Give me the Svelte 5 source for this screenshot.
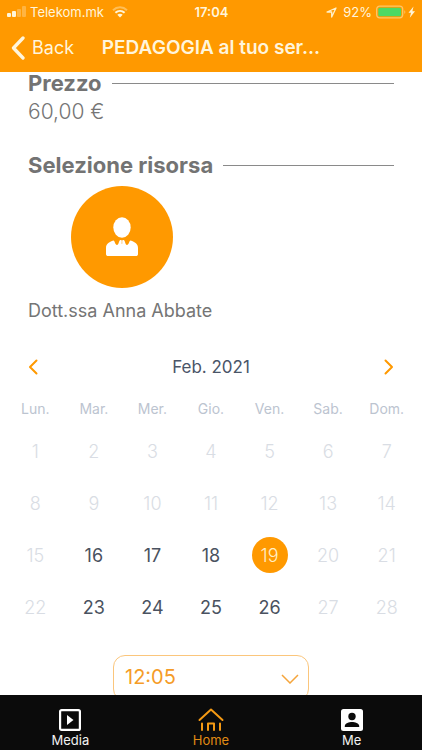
<script lang="ts">
	interface Day {
		day: number;
		available: boolean;
	}

	const weekdays = ['Lun.', 'Mar.', 'Mer.', 'Gio.', 'Ven.', 'Sab.', 'Dom.'];
	const availableDays = [16, 17, 18, 19, 23, 24, 25, 26];
	const times = ['12:05', '12:35', '13:05'];

	// February 2021 starts on a Monday, so it fills exactly four weeks
	const weeks: Day[][] = Array.from({ length: 4 }, (_, w) =>
		Array.from({ length: 7 }, (_, d) => {
			const day = w * 7 + d + 1;
			return { day, available: availableDays.includes(day) };
		})
	);

	let selectedDay = $state(19);
	let selectedTime = $state('12:05');
</script>

<div class="app">
	<header class="header">
		<div class="status-bar">
			<div class="status-side">
				<svg width="19" height="12" viewBox="0 0 19 12" fill="#fff5d8">
					<rect x="0" y="7" width="4" height="4" rx="1" />
					<rect x="5" y="5" width="4" height="6" rx="1" />
					<rect x="10" y="3" width="4" height="8" rx="1" opacity="0.3" />
					<rect x="15" y="0" width="4" height="11" rx="1" opacity="0.3" />
				</svg>
				<span class="carrier">Telekom.mk</span>
				<svg width="16" height="12" viewBox="0 0 16 12" fill="none" stroke="#fff5d8" stroke-width="2">
					<path d="M1 4.2C5 .4 11 .4 15 4.2" opacity="0.4" />
					<path d="M3.400 6.800c2.700-2.500 6.500-2.500 9.200 0" />
					<path d="M8 11.500 5.300 8.800c1.500-1.300 3.900-1.300 5.400 0z" fill="#fff5d8" stroke="none" />
				</svg>
			</div>
			<span class="clock">17:04</span>
			<div class="status-side right">
				<svg width="11" height="11" viewBox="0 0 11 11" fill="none" stroke="#fff0c8" stroke-width="1.300" stroke-linejoin="round">
					<path d="M10 1 1 5h4.700v5z" />
				</svg>
				<span class="battery-level">92%</span>
				<svg width="40" height="14" viewBox="0 0 40 14">
					<rect x="0.700" y="1.200" width="26" height="11.600" rx="3" fill="none" stroke="#ffc766" stroke-width="1.300" />
					<rect x="2.300" y="2.800" width="22.800" height="8.400" rx="1.500" fill="#4cd964" />
					<path d="M28.300 5.200c1.400.5 1.400 3.100 0 3.600z" fill="#ffc766" />
					<path d="M37.500 1.500l-5 6.300H35l-1.200 5 5.200-6.600h-2.600z" fill="#fff5d8" />
				</svg>
			</div>
		</div>
		<div class="title-bar">
			<button class="back">
				<svg width="14" height="24" viewBox="0 0 14 24" fill="none" stroke="#fff5dc" stroke-width="3.300" stroke-linecap="round" stroke-linejoin="round">
					<path d="M12 2 2.500 12 12 22" />
				</svg>
				Back
			</button>
			<h1 class="title">PEDAGOGIA al tuo ser...</h1>
		</div>
	</header>

	<main class="content">
		<section class="section">
			<h2 class="section-title">Prezzo</h2>
			<p class="price">60,00 €</p>
		</section>

		<section class="section">
			<h2 class="section-title">Selezione risorsa</h2>
			<button class="resource">
				<span class="avatar">
					<svg width="34" height="40" viewBox="0 0 34 40" fill="#fff">
						<ellipse cx="17" cy="10.500" rx="8.700" ry="10.300" />
						<path d="M1 37v-6c0-4 3-6 7.500-7.500 1.300.4 1.800 4.500 3.500 4.500 1.800 0 2-5 3.400-5h.8c1.200 0 0 4 .8 4s-.4-4 .8-4h.8c1.400 0 1.600 5 3.400 5 1.700 0 2.200-4.100 3.500-4.500C30 25 33 27 33 31v6c0 1.500-1 2-2 2H3c-1 0-2-.5-2-2z" />
					</svg>
				</span>
				<span class="resource-name">Dott.ssa Anna Abbate</span>
			</button>
		</section>

		<section class="calendar">
			<div class="month">
				<button class="arrow" aria-label="Mese precedente">
					<svg width="10" height="16" viewBox="0 0 10 16"><path d="M8.500 1.500 2 8l6.500 6.500" /></svg>
				</button>
				<span>Feb. 2021</span>
				<button class="arrow" aria-label="Mese successivo">
					<svg width="10" height="16" viewBox="0 0 10 16"><path d="M1.500 1.500 8 8l-6.500 6.500" /></svg>
				</button>
			</div>
			<table class="days">
				<thead>
					<tr>
						{#each weekdays as weekday}
							<th scope="col">{weekday}</th>
						{/each}
					</tr>
				</thead>
				<tbody>
					{#each weeks as week}
						<tr>
							{#each week as { day, available }}
								<td>
									<button
										class="day"
										class:selected={day === selectedDay}
										disabled={!available}
										onclick={() => (selectedDay = day)}
									>
										{day}
									</button>
								</td>
							{/each}
						</tr>
					{/each}
				</tbody>
			</table>
		</section>

		<div class="time">
			<select aria-label="Orario" bind:value={selectedTime}>
				{#each times as time}
					<option value={time}>{time}</option>
				{/each}
			</select>
			<svg class="time-arrow" width="18" height="10" viewBox="0 0 18 10" fill="none" stroke="#f5a53c" stroke-width="1.500">
				<path d="M1 1l8 8 8-8" />
			</svg>
		</div>
	</main>

	<nav class="tabs">
		<a class="tab" href="#media">
			<svg width="24" height="24" viewBox="0 0 24 24" fill="none" stroke="#fff" stroke-width="2.200">
				<rect x="2.100" y="2.100" width="19.800" height="19.800" rx="1.500" />
				<path d="M9 7v10l6.500-5z" fill="#fff" stroke="none" />
			</svg>
			Media
		</a>
		<a class="tab active" href="#home" aria-current="page">
			<svg width="26" height="24" viewBox="0 0 26 24" fill="none" stroke="#f59a14" stroke-width="2" stroke-linecap="round" stroke-linejoin="round">
				<path d="M1.500 12 13 1.500 24.500 12" />
				<path d="M4 15.500V22M10 22v-6.500h6V22M22 15.500V22" />
			</svg>
			Home
		</a>
		<a class="tab" href="#me">
			<svg width="24" height="24" viewBox="0 0 24 24">
				<rect x="1" y="1" width="22" height="22" rx="2.500" fill="#fff" />
				<circle cx="12" cy="8.500" r="3.700" fill="#0b0b0b" />
				<path d="M4.800 19v-1c0-2.600 4.400-4 7.200-4s7.200 1.400 7.200 4v1z" fill="#0b0b0b" />
			</svg>
			Me
		</a>
	</nav>
</div>

<style>
	:global(body) {
		margin: 0;
		background: #fff;
	}

	.app {
		display: flex;
		flex-direction: column;
		height: 100vh;
		overflow: hidden;
		font-family: Inter, 'Liberation Sans', sans-serif;
		color: #757575;
	}

	button {
		border: 0;
		padding: 0;
		background: none;
		font: inherit;
		color: inherit;
		cursor: pointer;
	}

	svg {
		display: block;
		flex: none;
	}

	.header {
		flex: none;
		background: #ff9900;
		color: #fff5dc;
	}

	.status-bar {
		display: flex;
		align-items: center;
		height: 24px;
		padding: 0 6px 0 7px;
		font-size: 13px;
	}

	.status-side {
		display: flex;
		flex: 1;
		align-items: center;
		gap: 4px;
	}

	.status-side.right {
		justify-content: flex-end;
	}

	.carrier {
		margin-right: 4px;
	}

	.battery-level {
		margin-left: 2px;
	}

	.clock {
		font-weight: 600;
	}

	.title-bar {
		display: grid;
		grid-template-columns: 1fr auto 1fr;
		align-items: center;
		height: 48px;
		padding: 0 11px;
	}

	.back {
		display: flex;
		align-items: center;
		gap: 7px;
		font-size: 18px;
		line-height: 24px;
	}

	.title {
		margin: 0;
		font-size: 19px;
		font-weight: 600;
		line-height: 24px;
		white-space: nowrap;
	}

	.content {
		flex: 1;
		min-height: 0;
		overflow: hidden;
	}

	.section {
		padding: 0 28px;
		margin-bottom: 28px;
	}

	.section-title {
		display: flex;
		align-items: center;
		gap: 10px;
		margin: 0;
		font-size: 22px;
		font-weight: 700;
		line-height: 22px;
		color: #737373;
	}

	.section-title::after {
		content: '';
		flex: 1;
		height: 1px;
		background: #8a8a8a;
	}

	.price {
		margin: 4px 0 0;
		font-size: 21px;
		font-weight: 300;
		line-height: 28px;
	}

	.resource {
		display: flex;
		flex-direction: column;
		align-items: center;
		gap: 11px;
		min-width: 188px;
		margin-top: 10px;
	}

	.avatar {
		display: flex;
		align-items: center;
		justify-content: center;
		width: 102px;
		height: 102px;
		border-radius: 50%;
		background: #ff9900;
	}

	.resource-name {
		align-self: flex-start;
		font-size: 18px;
		line-height: 24px;
	}

	.calendar {
		padding: 0 6px;
	}

	.month {
		display: flex;
		align-items: center;
		justify-content: space-between;
		height: 32px;
		padding: 0 16px;
		font-size: 17px;
		color: #4a5568;
	}

	.arrow {
		display: flex;
		align-items: center;
		justify-content: center;
		width: 22px;
		height: 32px;
	}

	.arrow path {
		fill: none;
		stroke: #ff9900;
		stroke-width: 2;
		stroke-linecap: round;
		stroke-linejoin: round;
	}

	.days {
		width: 100%;
		margin-top: 16px;
		table-layout: fixed;
		border-collapse: collapse;
	}

	th {
		height: 20px;
		padding: 0 0 6px;
		font-size: 14px;
		font-weight: 400;
		line-height: 20px;
		color: #bcc4d0;
	}

	td {
		height: 52px;
		padding: 0;
		text-align: center;
	}

	.day {
		width: 36px;
		height: 36px;
		border-radius: 50%;
		font-size: 18px;
		color: #4a5260;
	}

	.day:disabled {
		font-weight: 300;
		color: #d9dde4;
		cursor: default;
	}

	.day.selected {
		background: #ff9900;
		font-weight: 300;
		color: #fff0c8;
	}

	.time {
		position: relative;
		width: 196px;
		margin: 22px auto 0;
	}

	.time select {
		appearance: none;
		box-sizing: border-box;
		width: 100%;
		height: 46px;
		padding: 0 40px 2px 11px;
		border: 1px solid #fbc67c;
		border-radius: 12px;
		background: #fff;
		font: inherit;
		font-size: 20px;
		color: #f59c28;
	}

	.time-arrow {
		position: absolute;
		top: 19px;
		right: 10px;
		pointer-events: none;
	}

	.tabs {
		display: grid;
		flex: none;
		grid-template-columns: repeat(3, 1fr);
		height: 55px;
		background: #0b0b0b;
	}

	.tab {
		display: flex;
		flex-direction: column;
		align-items: center;
		padding-top: 13px;
		font-size: 13px;
		line-height: 16px;
		color: #f2f2f2;
		text-decoration: none;
	}

	.tab.active {
		color: #e08b14;
	}
</style>
